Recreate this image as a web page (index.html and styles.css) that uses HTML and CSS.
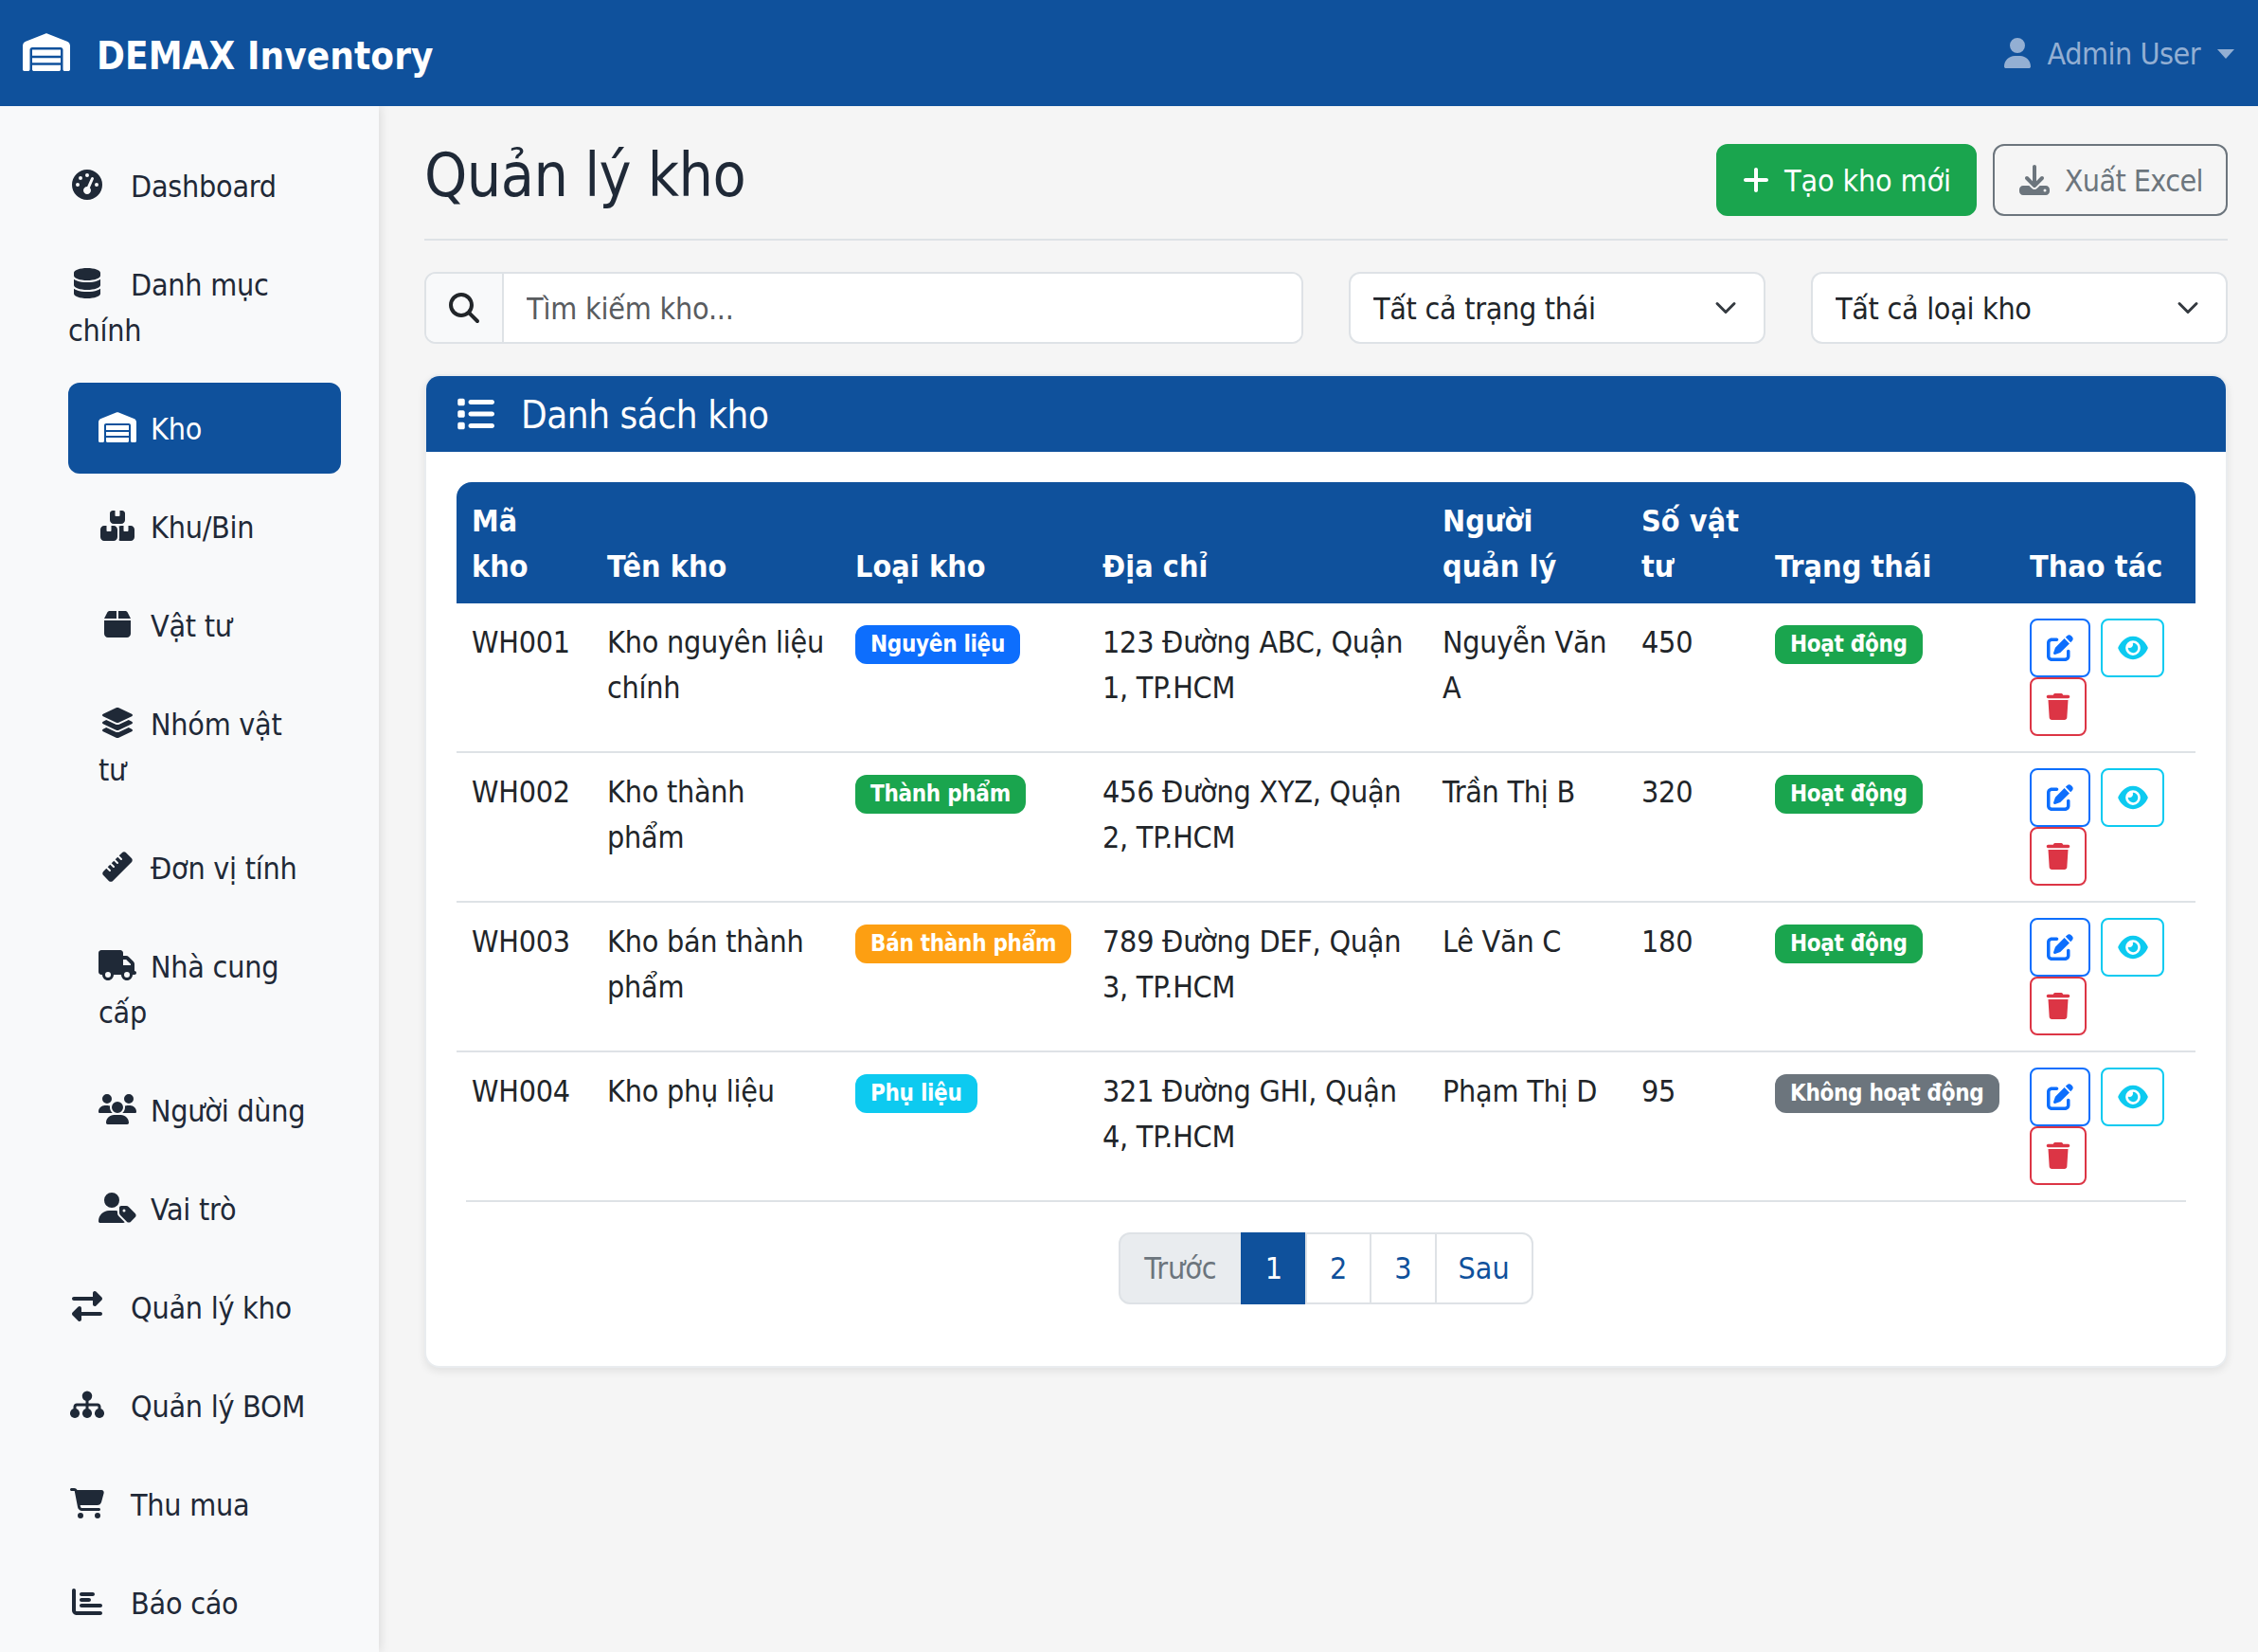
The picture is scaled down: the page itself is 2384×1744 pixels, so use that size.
FILE: index.html
```html
<!DOCTYPE html>
<html lang="en">
<head>
    <meta charset="UTF-8">
    <meta name="viewport" content="width=device-width, initial-scale=1.0">
    <link rel="stylesheet" href="styles.css">
    <title>Quản lý kho</title>
</head>
<body>

<svg class="sprite" xmlns="http://www.w3.org/2000/svg">
    <symbol id="i-warehouse" viewBox="0 0 640 512"><path d="M0 488V171.3c0-26.2 15.9-49.7 40.2-59.4L308.1 4.8c7.6-3.1 16.1-3.1 23.8 0L599.8 111.9c24.3 9.7 40.2 33.3 40.2 59.4V488c0 13.3-10.7 24-24 24H568c-13.3 0-24-10.7-24-24V224c0-17.7-14.3-32-32-32H128c-17.7 0-32 14.3-32 32V488c0 13.3-10.7 24-24 24H24c-13.3 0-24-10.7-24-24zm488 24l-336 0c-13.3 0-24-10.7-24-24V432H512l0 56c0 13.3-10.7 24-24 24zM128 400V336H512v64H128zm0-96V224H512l0 80H128z"/></symbol>
    <symbol id="i-gauge" viewBox="0 0 512 512"><path d="M0 256a256 256 0 1 1 512 0A256 256 0 1 1 0 256zM288 96a32 32 0 1 0 -64 0 32 32 0 1 0 64 0zM256 416c35.3 0 64-28.7 64-64c0-17.4-6.9-33.1-18.1-44.6L366 161.7c5.3-12.1-.2-26.3-12.3-31.6s-26.3 .2-31.6 12.3L257.9 288c-.6 0-1.3 0-1.9 0c-35.3 0-64 28.7-64 64s28.7 64 64 64zM176 144a32 32 0 1 0 -64 0 32 32 0 1 0 64 0zM96 288a32 32 0 1 0 0-64 32 32 0 1 0 0 64zm352-32a32 32 0 1 0 -64 0 32 32 0 1 0 64 0z"/></symbol>
    <symbol id="i-database" viewBox="0 0 448 512"><path d="M448 80v48c0 44.2-100.3 80-224 80S0 172.2 0 128V80C0 35.8 100.3 0 224 0S448 35.8 448 80zM393.2 214.7c20.8-7.4 39.9-16.9 54.8-28.6V288c0 44.2-100.3 80-224 80S0 332.2 0 288V186.1c14.9 11.8 34 21.2 54.8 28.6C99.7 230.7 159.5 240 224 240s124.3-9.3 169.2-25.3zM0 346.1c14.9 11.8 34 21.2 54.8 28.6C99.7 390.7 159.5 400 224 400s124.3-9.3 169.2-25.3c20.8-7.4 39.9-16.9 54.8-28.6V432c0 44.2-100.3 80-224 80S0 476.2 0 432V346.1z"/></symbol>
    <symbol id="i-boxes" viewBox="0 0 576 512"><path d="M248 0H208c-26.5 0-48 21.5-48 48V160c0 35.3 28.7 64 64 64H352c35.3 0 64-28.7 64-64V48c0-26.5-21.5-48-48-48H328V80c0 8.8-7.2 16-16 16H264c-8.8 0-16-7.2-16-16V0zM64 256c-35.3 0-64 28.7-64 64V448c0 35.3 28.7 64 64 64H224c35.3 0 64-28.7 64-64V320c0-35.3-28.7-64-64-64H184v80c0 8.8-7.2 16-16 16H120c-8.8 0-16-7.2-16-16V256H64zM352 512H512c35.3 0 64-28.7 64-64V320c0-35.3-28.7-64-64-64H472v80c0 8.8-7.2 16-16 16H408c-8.8 0-16-7.2-16-16V256H352c-15 0-28.8 5.1-39.7 13.8c4.9 10.4 7.7 22 7.7 34.2V464c0 12.2-2.8 23.8-7.7 34.2C323.2 506.9 337 512 352 512z"/></symbol>
    <symbol id="i-box" viewBox="0 0 448 512"><path d="M50.7 58.5L0 160H208V32H93.7C75.5 32 58.9 42.3 50.7 58.5zM240 160H448L397.3 58.5C389.1 42.3 372.5 32 354.3 32H240V160zm208 32H0V416c0 35.3 28.7 64 64 64H384c35.3 0 64-28.7 64-64V192z"/></symbol>
    <symbol id="i-layers" viewBox="0 0 576 512"><path d="M264.5 5.2c14.9-6.9 32.1-6.9 47 0l218.6 101c8.5 3.9 13.9 12.4 13.9 21.8s-5.4 17.9-13.9 21.8l-218.6 101c-14.9 6.9-32.1 6.9-47 0L45.9 149.8C37.4 145.8 32 137.3 32 128s5.4-17.9 13.9-21.8L264.5 5.2zM476.9 209.6l53.2 24.6c8.5 3.9 13.9 12.4 13.9 21.8s-5.4 17.9-13.9 21.8l-218.6 101c-14.9 6.9-32.1 6.9-47 0L45.9 277.8C37.4 273.8 32 265.3 32 256s5.4-17.9 13.9-21.8l53.2-24.6 152 70.2c23.4 10.8 50.4 10.8 73.8 0l152-70.2zm-152 198.2l152-70.2 53.2 24.6c8.5 3.9 13.9 12.4 13.9 21.8s-5.4 17.9-13.9 21.8l-218.6 101c-14.9 6.9-32.1 6.9-47 0L45.9 405.8C37.4 401.8 32 393.3 32 384s5.4-17.9 13.9-21.8l53.2-24.6 152 70.2c23.4 10.8 50.4 10.8 73.8 0z"/></symbol>
    <symbol id="i-ruler" viewBox="0 0 512 512"><path d="M177.9 494.1c-18.7 18.7-49.1 18.7-67.9 0L17.9 401.9c-18.7-18.7-18.7-49.1 0-67.9l50.7-50.7 48 48c6.2 6.2 16.4 6.2 22.6 0s6.2-16.4 0-22.6l-48-48 41.4-41.4 48 48c6.2 6.2 16.4 6.2 22.6 0s6.2-16.4 0-22.6l-48-48 41.4-41.4 48 48c6.2 6.2 16.4 6.2 22.6 0s6.2-16.4 0-22.6l-48-48 41.4-41.4 48 48c6.2 6.2 16.4 6.2 22.6 0s6.2-16.4 0-22.6l-48-48 50.7-50.7c18.7-18.7 49.1-18.7 67.9 0l92.1 92.1c18.7 18.7 18.7 49.1 0 67.9L177.9 494.1z"/></symbol>
    <symbol id="i-truck" viewBox="0 0 640 512"><path d="M48 0C21.5 0 0 21.5 0 48V368c0 26.5 21.5 48 48 48H64c0 53 43 96 96 96s96-43 96-96H384c0 53 43 96 96 96s96-43 96-96h32c17.7 0 32-14.3 32-32s-14.3-32-32-32V288 256 237.3c0-17-6.7-33.3-18.7-45.3L512 114.7c-12-12-28.3-18.7-45.3-18.7H416V48c0-26.5-21.5-48-48-48H48zM416 160h50.7L544 237.3V256H416V160zM112 416a48 48 0 1 1 96 0 48 48 0 1 1 -96 0zm368-48a48 48 0 1 1 0 96 48 48 0 1 1 0-96z"/></symbol>
    <symbol id="i-users" viewBox="0 0 640 512"><path d="M144 0a80 80 0 1 1 0 160A80 80 0 1 1 144 0zM512 0a80 80 0 1 1 0 160A80 80 0 1 1 512 0zM0 298.7C0 239.8 47.8 192 106.7 192h42.7c15.9 0 31 3.5 44.6 9.7c-1.3 7.2-1.9 14.7-1.9 22.3c0 38.2 16.8 72.5 43.3 96c-.2 0-.4 0-.7 0H21.3C9.6 320 0 310.4 0 298.7zM405.3 320c-.2 0-.4 0-.7 0c26.6-23.5 43.3-57.8 43.3-96c0-7.6-.7-15-1.9-22.3c13.6-6.3 28.7-9.7 44.6-9.7h42.7C592.2 192 640 239.8 640 298.7c0 11.8-9.6 21.3-21.3 21.3H405.3zM224 224a96 96 0 1 1 192 0 96 96 0 1 1 -192 0zM128 485.3C128 411.7 187.7 352 261.3 352H378.7C452.3 352 512 411.7 512 485.3c0 14.7-11.9 26.7-26.7 26.7H154.7c-14.7 0-26.7-11.9-26.7-26.7z"/></symbol>
    <symbol id="i-user-tag" viewBox="0 0 640 512"><path d="M224 256A128 128 0 1 0 224 0a128 128 0 1 0 0 256zm-45.7 48C79.8 304 0 383.8 0 482.3C0 498.7 13.3 512 29.7 512H418.3c10 0 18.8-4.9 24.2-12.5l-99.2-99.2c-14.9-14.9-23.3-35.1-23.3-56.1v-33c-15.9-4.7-32.8-7.2-50.3-7.2H178.3zM384 224c-17.7 0-32 14.3-32 32v82.7c0 17 6.7 33.3 18.7 45.3L478 491.3c18.7 18.7 49.1 18.7 67.9 0l73.4-73.4c18.7-18.7 18.7-49.1 0-67.9L512 242.7c-12-12-28.3-18.7-45.3-18.7H384zm24 80a24 24 0 1 1 48 0 24 24 0 1 1 -48 0z"/></symbol>
    <symbol id="i-exchange" viewBox="0 0 512 512"><path d="M502.6 150.6c12.5-12.5 12.5-32.8 0-45.3l-96-96c-9.2-9.2-22.9-11.9-34.9-6.9S352 19.1 352 32V96H32C14.3 96 0 110.3 0 128s14.3 32 32 32H352v64c0 12.9 7.8 24.6 19.8 29.6s25.7 2.2 34.9-6.9l96-96zM105.4 502.6c9.2 9.2 22.9 11.9 34.9 6.9s19.7-16.6 19.7-29.5V416H480c17.7 0 32-14.3 32-32s-14.3-32-32-32H160V288c0-12.9-7.8-24.6-19.8-29.6s-25.7-2.2-34.9 6.9l-96 96c-12.5 12.5-12.5 32.8 0 45.3l96 96z"/></symbol>
    <symbol id="i-sitemap" viewBox="0 0 576 512"><rect x="204" y="24" width="168" height="168" rx="84"/><rect x="0" y="320" width="160" height="160" rx="76"/><rect x="208" y="320" width="160" height="160" rx="76"/><rect x="416" y="320" width="160" height="160" rx="76"/><path d="M264 180h48v52h152c30.9 0 56 25.1 56 56v44h-48v-44c0-4.4-3.6-8-8-8H312v50h-48v-50H112c-4.4 0-8 3.6-8 8v44H56v-44c0-30.9 25.1-56 56-56h152z"/></symbol>
    <symbol id="i-cart" viewBox="0 0 576 512"><path d="M0 24C0 10.7 10.7 0 24 0H69.5c22 0 41.5 12.8 50.6 32h411c26.3 0 45.5 25 38.6 50.4l-41 152.3c-8.5 31.4-37 53.3-69.5 53.3H170.7l5.4 28.5c2.2 11.3 12.1 19.5 23.6 19.5H488c13.3 0 24 10.7 24 24s-10.7 24-24 24H199.7c-34.6 0-64.3-24.6-70.7-58.5L77.4 54.5c-.7-3.8-4-6.5-7.9-6.5H24C10.7 48 0 37.3 0 24zM128 464a48 48 0 1 1 96 0 48 48 0 1 1 -96 0zm336-48a48 48 0 1 1 0 96 48 48 0 1 1 0-96z"/></symbol>
    <symbol id="i-chart" viewBox="0 0 512 512"><path d="M32 32c17.7 0 32 14.3 32 32V400c0 8.8 7.2 16 16 16H480c17.7 0 32 14.3 32 32s-14.3 32-32 32H80c-44.2 0-80-35.8-80-80V64C0 46.3 14.3 32 32 32zm96 96c0-17.7 14.3-32 32-32l192 0c17.7 0 32 14.3 32 32s-14.3 32-32 32l-192 0c-17.7 0-32-14.3-32-32zm32 64H288c17.7 0 32 14.3 32 32s-14.3 32-32 32H160c-17.7 0-32-14.3-32-32s14.3-32 32-32zm0 96H480c17.7 0 32 14.3 32 32s-14.3 32-32 32H160c-17.7 0-32-14.3-32-32s14.3-32 32-32z"/></symbol>
    <symbol id="i-user" viewBox="0 0 448 512"><path d="M224 256A128 128 0 1 0 224 0a128 128 0 1 0 0 256zm-45.7 48C79.8 304 0 383.8 0 482.3C0 498.7 13.3 512 29.7 512H418.3c16.4 0 29.7-13.3 29.7-29.7C448 383.8 368.2 304 269.7 304H178.3z"/></symbol>
    <symbol id="i-plus" viewBox="0 0 448 512"><path d="M256 80c0-17.7-14.3-32-32-32s-32 14.3-32 32V224H48c-17.7 0-32 14.3-32 32s14.3 32 32 32H192V432c0 17.7 14.3 32 32 32s32-14.3 32-32V288H400c17.7 0 32-14.3 32-32s-14.3-32-32-32H256V80z"/></symbol>
    <symbol id="i-download" viewBox="0 0 512 512"><path d="M288 32c0-17.7-14.3-32-32-32s-32 14.3-32 32V274.7l-73.4-73.4c-12.5-12.5-32.8-12.5-45.3 0s-12.5 32.8 0 45.3l128 128c12.5 12.5 32.8 12.5 45.3 0l128-128c12.5-12.5 12.5-32.8 0-45.3s-32.8-12.5-45.3 0L288 274.7V32zM64 352c-35.3 0-64 28.7-64 64v32c0 35.3 28.7 64 64 64H448c35.3 0 64-28.7 64-64V416c0-35.3-28.7-64-64-64H346.5l-45.3 45.3c-25 25-65.5 25-90.5 0L165.5 352H64zm368 56a24 24 0 1 1 0 48 24 24 0 1 1 0-48z"/></symbol>
    <symbol id="i-search" viewBox="0 0 512 512"><path d="M416 208c0 45.9-14.9 88.3-40 122.7L502.6 457.4c12.5 12.5 12.5 32.8 0 45.3s-32.8 12.5-45.3 0L330.7 376c-34.4 25.2-76.8 40-122.7 40C93.1 416 0 322.9 0 208S93.1 0 208 0S416 93.1 416 208zM208 352a144 144 0 1 0 0-288 144 144 0 1 0 0 288z"/></symbol>
    <symbol id="i-list" viewBox="0 0 512 512"><path d="M40 48C26.7 48 16 58.7 16 72v48c0 13.3 10.7 24 24 24H88c13.3 0 24-10.7 24-24V72c0-13.3-10.7-24-24-24H40zM192 64c-17.7 0-32 14.3-32 32s14.3 32 32 32H480c17.7 0 32-14.3 32-32s-14.3-32-32-32H192zm0 160c-17.7 0-32 14.3-32 32s14.3 32 32 32H480c17.7 0 32-14.3 32-32s-14.3-32-32-32H192zm0 160c-17.7 0-32 14.3-32 32s14.3 32 32 32H480c17.7 0 32-14.3 32-32s-14.3-32-32-32H192zM16 232v48c0 13.3 10.7 24 24 24H88c13.3 0 24-10.7 24-24V232c0-13.3-10.7-24-24-24H40c-13.3 0-24 10.7-24 24zM40 368c-13.3 0-24 10.7-24 24v48c0 13.3 10.7 24 24 24H88c13.3 0 24-10.7 24-24V392c0-13.3-10.7-24-24-24H40z"/></symbol>
    <symbol id="i-edit" viewBox="0 0 512 512"><path d="M471.6 21.7c-21.9-21.9-57.3-21.9-79.2 0L362.3 51.7l97.9 97.9 30.1-30.1c21.9-21.9 21.9-57.3 0-79.2L471.6 21.7zm-299.2 220c-6.1 6.1-10.8 13.6-13.5 21.9l-29.6 88.8c-2.9 8.6-.6 18.1 5.8 24.6s15.9 8.7 24.6 5.8l88.8-29.6c8.2-2.7 15.7-7.4 21.9-13.5L437.7 172.3 339.7 74.3 172.4 241.7zM96 64C43 64 0 107 0 160V416c0 53 43 96 96 96H352c53 0 96-43 96-96V320c0-17.7-14.3-32-32-32s-32 14.3-32 32v96c0 17.7-14.3 32-32 32H96c-17.7 0-32-14.3-32-32V160c0-17.7 14.3-32 32-32h96c17.7 0 32-14.3 32-32s-14.3-32-32-32H96z"/></symbol>
    <symbol id="i-eye" viewBox="0 0 576 512"><path d="M288 32c-80.8 0-145.5 36.8-192.6 80.6C48.6 156 17.3 208 2.5 243.7c-3.3 7.9-3.3 16.7 0 24.6C17.3 304 48.6 356 95.4 399.4C142.5 443.2 207.2 480 288 480s145.5-36.8 192.6-80.6c46.8-43.5 78.1-95.4 93-131.1c3.3-7.9 3.3-16.7 0-24.6c-14.9-35.7-46.2-87.7-93-131.1C433.5 68.8 368.8 32 288 32zM144 256a144 144 0 1 1 288 0 144 144 0 1 1 -288 0zm144-64c0 35.3-28.7 64-64 64c-7.1 0-13.9-1.2-20.3-3.3c-5.5-1.8-11.9 1.6-11.7 7.4c.3 6.9 1.3 13.8 3.2 20.7c13.7 51.2 66.4 81.6 117.6 67.9s81.6-66.4 67.9-117.6c-11.1-41.5-47.8-69.4-88.6-71.1c-5.8-.2-9.2 6.1-7.4 11.7c2.1 6.4 3.3 13.2 3.3 20.3z"/></symbol>
    <symbol id="i-trash" viewBox="0 0 448 512"><path d="M135.2 17.7L128 32H32C14.3 32 0 46.3 0 64S14.3 96 32 96H416c17.7 0 32-14.3 32-32s-14.3-32-32-32H320l-7.2-14.3C307.4 6.8 296.3 0 284.2 0H163.8c-12.1 0-23.2 6.8-28.6 17.7zM416 128H32L53.2 467c1.6 25.3 22.6 45 47.9 45H346.9c25.3 0 46.3-19.7 47.9-45L416 128z"/></symbol>
</svg>

<nav class="navbar">
    <a class="brand" href="#"><svg class="icon brand-icon"><use href="#i-warehouse"/></svg>DEMAX Inventory</a>
    <a class="user-menu" href="#"><svg class="icon user-icon"><use href="#i-user"/></svg>Admin User<span class="caret"></span></a>
</nav>

<div class="layout">
    <aside class="sidebar">
        <ul class="side-nav">
            <li><a href="#"><svg class="icon"><use href="#i-gauge"/></svg>Dashboard</a></li>
            <li><a href="#"><svg class="icon"><use href="#i-database"/></svg>Danh mục chính</a></li>
            <li class="sub"><a class="active" href="#"><svg class="icon"><use href="#i-warehouse"/></svg>Kho</a></li>
            <li class="sub"><a href="#"><svg class="icon"><use href="#i-boxes"/></svg>Khu/Bin</a></li>
            <li class="sub"><a href="#"><svg class="icon"><use href="#i-box"/></svg>Vật tư</a></li>
            <li class="sub"><a href="#"><svg class="icon"><use href="#i-layers"/></svg>Nhóm vật tư</a></li>
            <li class="sub"><a href="#"><svg class="icon"><use href="#i-ruler"/></svg>Đơn vị tính</a></li>
            <li class="sub"><a href="#"><svg class="icon"><use href="#i-truck"/></svg>Nhà cung cấp</a></li>
            <li class="sub"><a href="#"><svg class="icon"><use href="#i-users"/></svg>Người dùng</a></li>
            <li class="sub"><a href="#"><svg class="icon"><use href="#i-user-tag"/></svg>Vai trò</a></li>
            <li><a href="#"><svg class="icon"><use href="#i-exchange"/></svg>Quản lý kho</a></li>
            <li><a href="#"><svg class="icon"><use href="#i-sitemap"/></svg>Quản lý BOM</a></li>
            <li><a href="#"><svg class="icon"><use href="#i-cart"/></svg>Thu mua</a></li>
            <li><a href="#"><svg class="icon"><use href="#i-chart"/></svg>Báo cáo</a></li>
        </ul>
    </aside>

    <main class="content">
        <div class="page-head">
            <h1>Quản lý kho</h1>
            <div class="page-actions">
                <button class="btn btn-green"><svg class="icon"><use href="#i-plus"/></svg>Tạo kho mới</button>
                <button class="btn btn-grey"><svg class="icon"><use href="#i-download"/></svg>Xuất Excel</button>
            </div>
        </div>

        <div class="filters">
            <div class="search">
                <span class="search-addon"><svg class="icon"><use href="#i-search"/></svg></span>
                <input type="text" placeholder="Tìm kiếm kho...">
            </div>
            <select><option>Tất cả trạng thái</option></select>
            <select><option>Tất cả loại kho</option></select>
        </div>

        <section class="card">
            <h2 class="card-head"><svg class="icon"><use href="#i-list"/></svg>Danh sách kho</h2>
            <div class="card-body">
                <table>
                    <colgroup>
                        <col class="c-code"><col class="c-name"><col class="c-type"><col class="c-addr">
                        <col class="c-owner"><col class="c-qty"><col class="c-status"><col class="c-act">
                    </colgroup>
                    <thead>
                        <tr><th>Mã kho</th><th>Tên kho</th><th>Loại kho</th><th>Địa chỉ</th><th>Người quản lý</th><th>Số vật tư</th><th>Trạng thái</th><th>Thao tác</th></tr>
                    </thead>
                    <tbody>
                        <tr>
                            <td>WH001</td>
                            <td>Kho nguyên liệu chính</td>
                            <td><span class="badge blue">Nguyên liệu</span></td>
                            <td>123 Đường ABC, Quận 1, TP.HCM</td>
                            <td>Nguyễn Văn A</td>
                            <td>450</td>
                            <td><span class="badge green">Hoạt động</span></td>
                            <td><div class="row-actions">
                                <button class="act act-edit"><svg class="icon"><use href="#i-edit"/></svg></button>
                                <button class="act act-view"><svg class="icon"><use href="#i-eye"/></svg></button>
                                <button class="act act-del"><svg class="icon"><use href="#i-trash"/></svg></button>
                            </div></td>
                        </tr>
                        <tr>
                            <td>WH002</td>
                            <td>Kho thành phẩm</td>
                            <td><span class="badge green">Thành phẩm</span></td>
                            <td>456 Đường XYZ, Quận 2, TP.HCM</td>
                            <td>Trần Thị B</td>
                            <td>320</td>
                            <td><span class="badge green">Hoạt động</span></td>
                            <td><div class="row-actions">
                                <button class="act act-edit"><svg class="icon"><use href="#i-edit"/></svg></button>
                                <button class="act act-view"><svg class="icon"><use href="#i-eye"/></svg></button>
                                <button class="act act-del"><svg class="icon"><use href="#i-trash"/></svg></button>
                            </div></td>
                        </tr>
                        <tr>
                            <td>WH003</td>
                            <td>Kho bán thành phẩm</td>
                            <td><span class="badge orange">Bán thành phẩm</span></td>
                            <td>789 Đường DEF, Quận 3, TP.HCM</td>
                            <td>Lê Văn C</td>
                            <td>180</td>
                            <td><span class="badge green">Hoạt động</span></td>
                            <td><div class="row-actions">
                                <button class="act act-edit"><svg class="icon"><use href="#i-edit"/></svg></button>
                                <button class="act act-view"><svg class="icon"><use href="#i-eye"/></svg></button>
                                <button class="act act-del"><svg class="icon"><use href="#i-trash"/></svg></button>
                            </div></td>
                        </tr>
                        <tr>
                            <td>WH004</td>
                            <td>Kho phụ liệu</td>
                            <td><span class="badge cyan">Phụ liệu</span></td>
                            <td>321 Đường GHI, Quận 4, TP.HCM</td>
                            <td>Phạm Thị D</td>
                            <td>95</td>
                            <td><span class="badge grey">Không hoạt động</span></td>
                            <td><div class="row-actions">
                                <button class="act act-edit"><svg class="icon"><use href="#i-edit"/></svg></button>
                                <button class="act act-view"><svg class="icon"><use href="#i-eye"/></svg></button>
                                <button class="act act-del"><svg class="icon"><use href="#i-trash"/></svg></button>
                            </div></td>
                        </tr>
                    </tbody>
                </table>

                <div class="table-end"></div>

                <ul class="pager">
                    <li class="disabled"><a href="#">Trước</a></li>
                    <li class="current"><a href="#">1</a></li>
                    <li><a href="#">2</a></li>
                    <li><a href="#">3</a></li>
                    <li><a href="#">Sau</a></li>
                </ul>
            </div>
        </section>
    </main>
</div>

</body>
</html>
```

FILE: styles.css
```css
* {
    box-sizing: border-box;
}

html, body {
    height: 100%;
}

body {
    margin: 0;
    overflow: hidden;
    display: flex;
    flex-direction: column;
    font-family: "DejaVu Sans", Verdana, sans-serif;
    font-stretch: condensed;
    font-size: 32px;
    line-height: 48px;
    letter-spacing: -0.25px;
    color: #212529;
    background-color: #f5f5f5;
}

a {
    color: inherit;
    text-decoration: none;
}

button, input, select {
    font: inherit;
    letter-spacing: inherit;
}

.sprite {
    display: none;
}

.icon {
    display: inline-block;
    width: 40px;
    height: 32px;
    vertical-align: -4px;
    fill: currentColor;
}

/* top bar */
.navbar {
    flex: none;
    height: 112px;
    display: flex;
    align-items: center;
    justify-content: space-between;
    padding: 0 25px 0 24px;
    background-color: #0f519c;
    color: #fff;
    position: relative;
    z-index: 2;
}

.brand {
    padding-top: 6px;
    font-size: 40px;
    font-weight: bold;
    letter-spacing: 0.1px;
    color: #fff;
}

.brand-icon {
    width: 50px;
    height: 40px;
    vertical-align: -2px;
    margin-right: 28px;
}

.user-menu {
    display: flex;
    align-items: center;
    padding-top: 2px;
    letter-spacing: -0.5px;
    color: #93afd3;
}

.user-icon {
    width: 28px;
    margin-top: -2px;
    margin-right: 18px;
}

.caret {
    width: 0;
    height: 0;
    margin-left: 18px;
    border-top: 10px solid #93afd3;
    border-left: 9px solid transparent;
    border-right: 9px solid transparent;
}

/* sidebar */
.layout {
    flex: 1;
    min-height: 0;
    display: flex;
}

.sidebar {
    flex: none;
    width: 400px;
    padding-top: 36px;
    background-color: #f8f9fa;
    box-shadow: 2px 0 10px rgba(0, 0, 0, 0.1);
    color: #1f2937;
    overflow: hidden;
}

.side-nav {
    list-style: none;
    margin: 0;
    padding: 0 40px 0 0;
}

.side-nav li {
    margin-bottom: 8px;
}

.side-nav a {
    display: block;
    padding: 25px 32px 23px 72px;
    border-radius: 12px;
}

.side-nav .icon {
    vertical-align: -3px;
    margin-right: 26px;
}

.side-nav .sub {
    margin-left: 72px;
}

.side-nav .sub a {
    padding: 25px 28px 23px 32px;
}

.side-nav .sub .icon {
    margin-right: 15px;
}

.side-nav a.active {
    background-color: #0f519c;
    color: #fff;
}

/* main column */
.content {
    flex: 1;
    min-width: 0;
    padding: 40px 32px 0 48px;
}

.page-head {
    display: flex;
    align-items: center;
    justify-content: space-between;
    padding-bottom: 24px;
    margin-bottom: 33px;
    border-bottom: 2px solid #dee2e6;
}

h1 {
    margin: 0;
    padding-bottom: 10px;
    font-size: 64px;
    line-height: 66px;
    letter-spacing: -0.55px;
    font-weight: normal;
    color: #1f2937;
}

.page-actions {
    display: flex;
    gap: 17px;
}

.btn {
    height: 76px;
    padding: 2px 25px 0 26px;
    border: 2px solid;
    border-radius: 12px;
}

.btn .icon {
    width: 28px;
    margin-top: -2px;
    margin-right: 16px;
}

.btn-green {
    letter-spacing: -0.15px;
    background-color: #1aa54e;
    border-color: #1aa54e;
    color: #fff;
}

.btn-grey {
    padding-right: 24px;
    letter-spacing: -0.6px;
    background-color: transparent;
    border-color: #6c757d;
    color: #6c757d;
}

.btn-grey .icon {
    width: 32px;
}

.filters {
    display: grid;
    grid-template-columns: 928px 440px 440px;
    gap: 48px;
    margin-bottom: 32px;
}

.search {
    display: flex;
    height: 76px;
    border: 2px solid #dee2e6;
    border-radius: 12px;
    overflow: hidden;
    background-color: #fff;
}

.search-addon {
    width: 82px;
    display: flex;
    align-items: center;
    justify-content: center;
    background-color: #f8f9fa;
    border-right: 2px solid #dee2e6;
    color: #212529;
}

.search input {
    flex: 1;
    min-width: 0;
    border: 0;
    outline: 0;
    padding: 2px 24px 0;
    letter-spacing: -0.2px;
    color: #212529;
}

.search input::placeholder {
    color: #595c5f;
    opacity: 1;
}

select {
    height: 76px;
    padding: 2px 24px 0;
    border: 2px solid #dee2e6;
    border-radius: 12px;
    letter-spacing: -0.3px;
    color: #212529;
    background: #fff url("data:image/svg+xml,%3csvg xmlns='http://www.w3.org/2000/svg' viewBox='0 0 16 16'%3e%3cpath fill='none' stroke='%23343a40' stroke-linecap='round' stroke-linejoin='round' stroke-width='2' d='m2 5 6 6 6-6'/%3e%3c/svg%3e") no-repeat right 24px center / 32px 24px;
    appearance: none;
}

/* card with the table */
.card {
    background-color: #fff;
    border: 2px solid #e9ecef;
    border-radius: 16px;
    box-shadow: 0 4px 8px rgba(0, 0, 0, 0.08);
    overflow: hidden;
}

.card-head {
    margin: 0;
    height: 80px;
    padding: 2px 32px 0;
    display: flex;
    align-items: center;
    font-size: 40px;
    font-weight: normal;
    letter-spacing: -0.45px;
    background-color: #0f519c;
    color: #fff;
}

.card-head .icon {
    width: 40px;
    height: 40px;
    margin-top: -2px;
    margin-right: 28px;
}

.card-body {
    padding: 32px;
}

table {
    width: 1836px;
    table-layout: fixed;
    border-collapse: separate;
    border-spacing: 0;
}

.c-code { width: 143px; }
.c-name { width: 262px; }
.c-type { width: 261px; }
.c-addr { width: 359px; }
.c-owner { width: 210px; }
.c-qty { width: 141px; }
.c-status { width: 269px; }
.c-act { width: 191px; }

th, td {
    padding: 17px 16px 15px;
    text-align: left;
}

th {
    vertical-align: bottom;
    letter-spacing: 0.1px;
    background-color: #0f519c;
    color: #fff;
    font-weight: bold;
}

th:first-child {
    border-top-left-radius: 16px;
}

th:last-child {
    border-top-right-radius: 16px;
}

td {
    vertical-align: top;
    border-bottom: 2px solid #dee2e6;
}

tbody tr:last-child td {
    border-bottom: 0;
}

.table-end {
    height: 2px;
    margin: 0 10px 32px;
    background-color: #dee2e6;
}

.badge {
    display: inline-block;
    vertical-align: 1px;
    padding: 8px 16px;
    font-size: 24px;
    line-height: 25px;
    letter-spacing: -0.3px;
    font-weight: bold;
    color: #fff;
    border-radius: 12px;
}

.blue { background-color: #0d6efd; }
.green { background-color: #1aa54e; }
.orange { background-color: #fd9f12; }
.cyan { background-color: #0dcaf0; }
.grey { background-color: #6c757d; }

.row-actions {
    display: flex;
    flex-wrap: wrap;
    column-gap: 11px;
    margin: -1px 0 1px;
}

.act {
    width: 64px;
    height: 62px;
    padding: 0;
    display: flex;
    align-items: center;
    justify-content: center;
    background-color: transparent;
    border: 2px solid;
    border-radius: 8px;
}

.act .icon {
    width: 28px;
    height: 28px;
}

.act-edit {
    color: #0d6efd;
}

.act-view {
    width: 67px;
    color: #0dcaf0;
}

.act-view .icon {
    width: 32px;
}

.act-del {
    width: 60px;
    color: #dc3545;
}

.pager {
    list-style: none;
    margin: 0 0 33px;
    padding: 0;
    display: flex;
    justify-content: center;
    letter-spacing: 0;
}

.pager a {
    display: block;
    height: 76px;
    padding: 12px 24px;
    margin-left: -2px;
    background-color: #fff;
    border: 2px solid #dee2e6;
    color: #0f519c;
}

.pager li:first-child a {
    margin-left: 0;
    padding: 12px 25px;
    border-radius: 12px 0 0 12px;
}

.pager li:last-child a {
    padding: 12px 23px;
    border-radius: 0 12px 12px 0;
}

.pager .disabled a {
    background-color: #e9ecef;
    color: #6c757d;
}

.pager .current a {
    background-color: #0f519c;
    border-color: #0f519c;
    color: #fff;
}
```
